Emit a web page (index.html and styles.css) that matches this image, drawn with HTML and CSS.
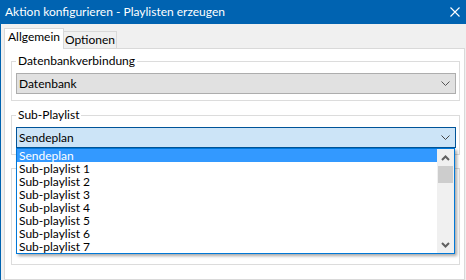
FILE: index.html
```html
<!DOCTYPE html>
<html lang="de">
<head>
<meta charset="utf-8">
<title>Aktion konfigurieren - Playlisten erzeugen</title>
<link rel="stylesheet" href="styles.css">
</head>
<body>
<div class="window">
  <div class="titlebar">
    <span class="title">Aktion konfigurieren - Playlisten erzeugen</span>
    <svg class="close" width="10" height="10" viewBox="0 0 10 10"><path d="M0.5 0.5L9.5 9.5M9.5 0.5L0.5 9.5" stroke="#fff" stroke-width="1.1" fill="none"/></svg>
  </div>
  <div class="content">
    <div class="tabs">
      <div class="tab active">Allgemein</div>
      <div class="tab">Optionen</div>
    </div>
    <div class="panel">
      <fieldset class="group">
        <legend>Datenbankverbindung</legend>
        <div class="combo disabled">
          <span class="combo-text">Datenbank</span>
          <span class="combo-arrow"><svg width="9" height="5" viewBox="0 0 9 5"><path d="M0.5 0.5L4.5 4.5L8.5 0.5" stroke="#555" stroke-width="1" fill="none"/></svg></span>
        </div>
      </fieldset>
      <fieldset class="group g2">
        <legend>Sub-Playlist</legend>
        <div class="combo-wrap">
          <div class="combo focused">
            <span class="combo-text">Sendeplan</span>
            <span class="combo-arrow"><svg width="9" height="5" viewBox="0 0 9 5"><path d="M0.5 0.5L4.5 4.5L8.5 0.5" stroke="#444" stroke-width="1" fill="none"/></svg></span>
          </div>
          <div class="dropdown">
            <ul class="list">
              <li class="item selected">Sendeplan</li>
              <li class="item">Sub-playlist 1</li>
              <li class="item">Sub-playlist 2</li>
              <li class="item">Sub-playlist 3</li>
              <li class="item">Sub-playlist 4</li>
              <li class="item">Sub-playlist 5</li>
              <li class="item">Sub-playlist 6</li>
              <li class="item">Sub-playlist 7</li>
            </ul>
            <div class="scrollbar">
              <div class="sb-btn"><svg width="9" height="6" viewBox="0 0 9 6"><path d="M1 5L4.5 1.5L8 5" stroke="#606060" stroke-width="2" fill="none"/></svg></div>
              <div class="sb-thumb"></div>
              <div class="sb-track"></div>
              <div class="sb-btn"><svg width="9" height="6" viewBox="0 0 9 6"><path d="M1 1L4.5 4.5L8 1" stroke="#606060" stroke-width="2" fill="none"/></svg></div>
            </div>
          </div>
        </div>
      </fieldset>
      <fieldset class="group g3"></fieldset>
    </div>
  </div>
</div>
</body>
</html>
```

FILE: styles.css
```css
* { box-sizing: border-box; }
html, body { margin: 0; padding: 0; }
body {
  width: 466px;
  height: 280px;
  overflow: hidden;
  font-family: Lato, "Noto Sans", sans-serif;
  font-size: 12px;
  color: #000;
  background: #f0f0f0;
}
.window {
  width: 466px;
  height: 280px;
  display: flex;
  flex-direction: column;
}
.titlebar {
  height: 24px;
  flex: none;
  background: #0063b1;
  display: flex;
  align-items: center;
  justify-content: space-between;
  padding: 0 6px 0 5px;
  color: #fff;
}
.title {
  font-size: 12px;
  line-height: 16px;
  white-space: nowrap;
}
.close { display: block; }
.content {
  flex: 1;
  border-left: 1px solid #0063b1;
  padding: 4px 1px 0 3px;
  display: flex;
  flex-direction: column;
}
.tabs {
  display: flex;
  align-items: flex-start;
  height: 20px;
  flex: none;
}
.tab {
  height: 17px;
  margin-top: 3px;
  margin-left: -1px;
  width: 54px;
  border: 1px solid #d9d9d9;
  border-bottom: none;
  background: #f0f0f0;
  text-align: center;
  line-height: 15px;
  white-space: nowrap;
}
.tab.active {
  margin-top: 0;
  margin-left: 0;
  width: 60px;
  height: 21px;
  background: #fff;
  position: relative;
  z-index: 1;
}
.panel {
  flex: 1;
  background: #fff;
  border: 1px solid #d9d9d9;
  padding: 4px 4px 0 6px;
  width: 461px;
}
.group {
  margin: 0 0 6px 0;
  padding: 4px 3px 6px 4px;
  border: 1px solid #dcdcdc;
  min-width: 0;
}
.group legend {
  padding: 0 2px;
  line-height: 16px;
  font-size: 12px;
}
.g2 { margin-bottom: 0; }
.g3 {
  margin-top: 13px;
  height: 97px;
  padding: 0;
}
.combo {
  height: 21px;
  border: 1px solid #adadad;
  background: #e1e1e1;
  display: flex;
  align-items: center;
  padding-left: 2px;
}
.combo.focused {
  background: #cce4f7;
  border-color: #005499;
}
.combo-text {
  flex: 1;
  line-height: 15px;
  white-space: nowrap;
}
.combo-arrow {
  width: 17px;
  display: flex;
  justify-content: center;
  align-items: center;
  margin-right: 1px;
}
.combo-arrow svg { display: block; }
.combo-wrap { position: relative; }
.dropdown {
  position: absolute;
  top: 21px;
  left: 0;
  width: 439px;
  border: 1px solid #0078d7;
  background: #fff;
  display: flex;
  box-shadow: 2px 2px 3px rgba(0, 0, 0, 0.35);
  z-index: 5;
}
.list {
  flex: 1;
  list-style: none;
  margin: 0;
  padding: 0;
}
.item {
  height: 13px;
  line-height: 13px;
  padding-left: 2px;
  white-space: nowrap;
}
.item.selected {
  background: #3399ff;
  color: #fff;
}
.scrollbar {
  width: 17px;
  background: #f0f0f0;
  display: flex;
  flex-direction: column;
}
.sb-btn {
  height: 17px;
  display: flex;
  align-items: center;
  justify-content: center;
}
.sb-btn svg { display: block; }
.sb-thumb {
  height: 17px;
  margin: 0 1px;
  background: #cdcdcd;
}
.sb-track { flex: 1; }
```
